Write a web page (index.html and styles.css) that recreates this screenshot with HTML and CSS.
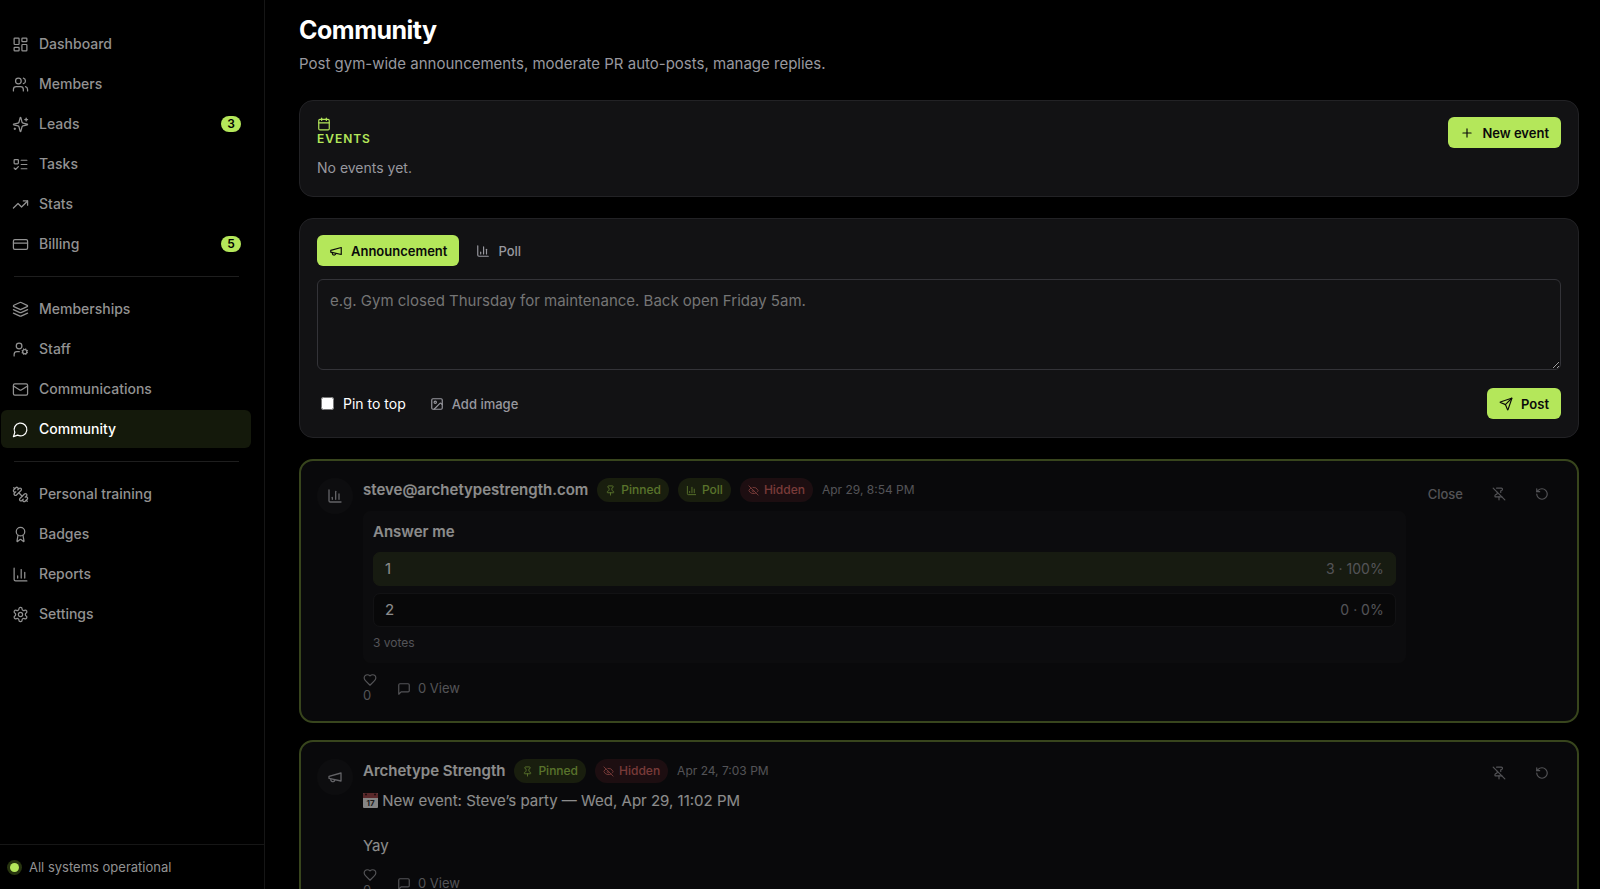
FILE: index.html
```html
<!DOCTYPE html>
<html lang="en">
<head>
<meta charset="utf-8">
<meta name="viewport" content="width=device-width, initial-scale=1">
<title>Community</title>
<link rel="stylesheet" href="styles.css">
</head>
<body>
<svg class="sprite" aria-hidden="true">
  <symbol id="i-dashboard" viewBox="0 0 24 24"><rect width="7" height="9" x="3" y="3" rx="1"/><rect width="7" height="5" x="14" y="3" rx="1"/><rect width="7" height="9" x="14" y="12" rx="1"/><rect width="7" height="5" x="3" y="16" rx="1"/></symbol>
  <symbol id="i-users" viewBox="0 0 24 24"><path d="M16 21v-2a4 4 0 0 0-4-4H6a4 4 0 0 0-4 4v2"/><circle cx="9" cy="7" r="4"/><path d="M22 21v-2a4 4 0 0 0-3-3.87"/><path d="M16 3.13a4 4 0 0 1 0 7.75"/></symbol>
  <symbol id="i-sparkles" viewBox="0 0 24 24"><path d="M9.937 15.5A2 2 0 0 0 8.5 14.063l-6.135-1.582a.5.5 0 0 1 0-.962L8.5 9.936A2 2 0 0 0 9.937 8.5l1.582-6.135a.5.5 0 0 1 .963 0L14.063 8.5A2 2 0 0 0 15.5 9.937l6.135 1.581a.5.5 0 0 1 0 .964L15.5 14.063a2 2 0 0 0-1.437 1.437l-1.582 6.135a.5.5 0 0 1-.963 0z"/><path d="M20 3v4"/><path d="M22 5h-4"/><path d="M4 17v2"/><path d="M5 18H3"/></symbol>
  <symbol id="i-tasks" viewBox="0 0 24 24"><rect x="3" y="5" width="6" height="6" rx="1"/><path d="m3 17 2 2 4-4"/><path d="M13 6h8"/><path d="M13 12h8"/><path d="M13 18h8"/></symbol>
  <symbol id="i-trend" viewBox="0 0 24 24"><path d="M22 7 13.5 15.5 8.5 10.5 2 17"/><path d="M16 7h6v6"/></symbol>
  <symbol id="i-card" viewBox="0 0 24 24"><rect width="20" height="14" x="2" y="5" rx="2"/><path d="M2 10h20"/></symbol>
  <symbol id="i-layers" viewBox="0 0 24 24"><path d="m12.83 2.18a2 2 0 0 0-1.66 0L2.6 6.08a1 1 0 0 0 0 1.83l8.58 3.91a2 2 0 0 0 1.66 0l8.58-3.9a1 1 0 0 0 0-1.83Z"/><path d="m22 12.2-9.17 4.13a2 2 0 0 1-1.66 0L2 12.2"/><path d="m22 17.2-9.17 4.13a2 2 0 0 1-1.66 0L2 17.2"/></symbol>
  <symbol id="i-usercog" viewBox="0 0 24 24"><circle cx="10" cy="7" r="4"/><path d="M10.3 15H7a4 4 0 0 0-4 4v2"/><circle cx="18" cy="15" r="3"/><path d="m21.7 16.4-.9-.3M15.2 13.9l-.9-.3M16.6 18.7l.3-.9M19.1 12.2l.3-.9M19.6 18.7l-.4-1M16.8 12.3l-.4-1M14.3 16.6l1-.4M20.7 13.8l1-.4"/></symbol>
  <symbol id="i-mail" viewBox="0 0 24 24"><rect width="20" height="16" x="2" y="4" rx="2"/><path d="m22 7-8.97 5.7a1.94 1.94 0 0 1-2.06 0L2 7"/></symbol>
  <symbol id="i-chat" viewBox="0 0 24 24"><path d="M7.9 20A9 9 0 1 0 4 16.1L2 22Z"/></symbol>
  <symbol id="i-dumbbell" viewBox="0 0 24 24"><path d="M14.4 14.4 9.6 9.6"/><path d="M18.657 21.485a2 2 0 1 1-2.829-2.828l-1.767 1.768a2 2 0 1 1-2.829-2.829l6.364-6.364a2 2 0 1 1 2.829 2.829l-1.768 1.767a2 2 0 1 1 2.828 2.829z"/><path d="m21.5 21.5-1.4-1.4"/><path d="M3.9 3.9 2.5 2.5"/><path d="M6.404 12.768a2 2 0 1 1-2.829-2.829l1.768-1.767a2 2 0 1 1-2.828-2.829l2.828-2.828a2 2 0 1 1 2.829 2.828l1.767-1.768a2 2 0 1 1 2.829 2.829z"/></symbol>
  <symbol id="i-award" viewBox="0 0 24 24"><path d="m15.477 12.89 1.515 8.526a.5.5 0 0 1-.81.47l-3.58-2.687a1 1 0 0 0-1.197 0l-3.586 2.686a.5.5 0 0 1-.81-.469l1.514-8.526"/><circle cx="12" cy="8" r="6"/></symbol>
  <symbol id="i-chart" viewBox="0 0 24 24"><path d="M3 3v16a2 2 0 0 0 2 2h16"/><path d="M18 17V9"/><path d="M13 17V5"/><path d="M8 17v-3"/></symbol>
  <symbol id="i-settings" viewBox="0 0 24 24"><path d="M12.22 2h-.44a2 2 0 0 0-2 2v.18a2 2 0 0 1-1 1.73l-.43.25a2 2 0 0 1-2 0l-.15-.08a2 2 0 0 0-2.73.73l-.22.38a2 2 0 0 0 .73 2.73l.15.1a2 2 0 0 1 1 1.72v.51a2 2 0 0 1-1 1.74l-.15.09a2 2 0 0 0-.73 2.73l.22.38a2 2 0 0 0 2.73.73l.15-.08a2 2 0 0 1 2 0l.43.25a2 2 0 0 1 1 1.73V20a2 2 0 0 0 2 2h.44a2 2 0 0 0 2-2v-.18a2 2 0 0 1 1-1.73l.43-.25a2 2 0 0 1 2 0l.15.08a2 2 0 0 0 2.73-.73l.22-.39a2 2 0 0 0-.73-2.73l-.15-.08a2 2 0 0 1-1-1.74v-.5a2 2 0 0 1 1-1.74l.15-.09a2 2 0 0 0 .73-2.73l-.22-.38a2 2 0 0 0-2.73-.73l-.15.08a2 2 0 0 1-2 0l-.43-.25a2 2 0 0 1-1-1.73V4a2 2 0 0 0-2-2z"/><circle cx="12" cy="12" r="3"/></symbol>
  <symbol id="i-calendar" viewBox="0 0 24 24"><path d="M8 2v4"/><path d="M16 2v4"/><rect width="18" height="18" x="3" y="4" rx="2"/><path d="M3 10h18"/></symbol>
  <symbol id="i-plus" viewBox="0 0 24 24"><path d="M5 12h14"/><path d="M12 5v14"/></symbol>
  <symbol id="i-megaphone" viewBox="0 0 24 24"><path d="m3 11 18-5v12L3 14v-3z"/><path d="M11.6 16.8a3 3 0 1 1-5.8-1.6"/></symbol>
  <symbol id="i-image" viewBox="0 0 24 24"><rect width="18" height="18" x="3" y="3" rx="2"/><circle cx="9" cy="9" r="2"/><path d="m21 13-1.600-1.600a2 2 0 0 0-2.828 0L7 21"/></symbol>
  <symbol id="i-send" viewBox="0 0 24 24"><path d="M14.536 21.686a.5.5 0 0 0 .937-.024l6.5-19a.496.496 0 0 0-.635-.635l-19 6.5a.5.5 0 0 0-.024.937l7.930 3.180a2 2 0 0 1 1.112 1.110z"/><path d="m21.854 2.147-10.940 10.939"/></symbol>
  <symbol id="i-pin" viewBox="0 0 24 24"><path d="M12 17v5"/><path d="M9 10.760a2 2 0 0 1-1.110 1.790l-1.780.9A2 2 0 0 0 5 15.240V16a1 1 0 0 0 1 1h12a1 1 0 0 0 1-1v-.760a2 2 0 0 0-1.110-1.790l-1.780-.9A2 2 0 0 1 15 10.760V7a1 1 0 0 1 1-1 2 2 0 0 0 0-4H8a2 2 0 0 0 0 4 1 1 0 0 1 1 1z"/></symbol>
  <symbol id="i-unpin" viewBox="0 0 24 24"><path d="M12 17v5"/><path d="M15 9.340V7a1 1 0 0 1 1-1 2 2 0 0 0 0-4H7.890"/><path d="m2 2 20 20"/><path d="M9 9v1.760a2 2 0 0 1-1.110 1.790l-1.780.9A2 2 0 0 0 5 15.240V16a1 1 0 0 0 1 1h11"/></symbol>
  <symbol id="i-eyeoff" viewBox="0 0 24 24"><path d="M10.733 5.076a10.744 10.744 0 0 1 11.205 6.575 1 1 0 0 1 0 .696 10.747 10.747 0 0 1-1.444 2.490"/><path d="M14.084 14.158a3 3 0 0 1-4.242-4.242"/><path d="M17.479 17.499a10.750 10.750 0 0 1-15.417-5.151 1 1 0 0 1 0-.696 10.750 10.750 0 0 1 4.446-5.143"/><path d="m2 2 20 20"/></symbol>
  <symbol id="i-undo" viewBox="0 0 24 24"><path d="M3 12a9 9 0 1 0 9-9 9.750 9.750 0 0 0-6.740 2.740L3 8"/><path d="M3 3v5h5"/></symbol>
  <symbol id="i-heart" viewBox="0 0 24 24"><path d="M19 14c1.490-1.460 3-3.210 3-5.500A5.500 5.500 0 0 0 16.500 3c-1.760 0-3 .5-4.500 2-1.500-1.500-2.740-2-4.500-2A5.500 5.500 0 0 0 2 8.500c0 2.300 1.500 4.050 3 5.500l7 7Z"/></symbol>
  <symbol id="i-comment" viewBox="0 0 24 24"><path d="M21 15a2 2 0 0 1-2 2H7l-4 4V5a2 2 0 0 1 2-2h14a2 2 0 0 1 2 2z"/></symbol>
</svg>

<div class="app">
  <aside class="sidebar">
    <nav class="nav" aria-label="Main">
      <a class="nav-item" href="#dashboard"><svg class="icon icon-nav"><use href="#i-dashboard"/></svg>Dashboard</a>
      <a class="nav-item" href="#members"><svg class="icon icon-nav"><use href="#i-users"/></svg>Members</a>
      <a class="nav-item" href="#leads"><svg class="icon icon-nav"><use href="#i-sparkles"/></svg>Leads<span class="count">3</span></a>
      <a class="nav-item" href="#tasks"><svg class="icon icon-nav"><use href="#i-tasks"/></svg>Tasks</a>
      <a class="nav-item" href="#stats"><svg class="icon icon-nav"><use href="#i-trend"/></svg>Stats</a>
      <a class="nav-item" href="#billing"><svg class="icon icon-nav"><use href="#i-card"/></svg>Billing<span class="count">5</span></a>
      <hr class="nav-rule">
      <a class="nav-item" href="#memberships"><svg class="icon icon-nav"><use href="#i-layers"/></svg>Memberships</a>
      <a class="nav-item" href="#staff"><svg class="icon icon-nav"><use href="#i-usercog"/></svg>Staff</a>
      <a class="nav-item" href="#communications"><svg class="icon icon-nav"><use href="#i-mail"/></svg>Communications</a>
      <a class="nav-item active" href="#community" aria-current="page"><svg class="icon icon-nav"><use href="#i-chat"/></svg>Community</a>
      <hr class="nav-rule">
      <a class="nav-item" href="#training"><svg class="icon icon-nav"><use href="#i-dumbbell"/></svg>Personal training</a>
      <a class="nav-item" href="#badges"><svg class="icon icon-nav"><use href="#i-award"/></svg>Badges</a>
      <a class="nav-item" href="#reports"><svg class="icon icon-nav"><use href="#i-chart"/></svg>Reports</a>
      <a class="nav-item" href="#settings"><svg class="icon icon-nav"><use href="#i-settings"/></svg>Settings</a>
    </nav>
    <div class="status"><span class="status-dot"></span>All systems operational</div>
  </aside>

  <main class="main">
    <header class="page-head">
      <h1 class="title">Community</h1>
      <p class="subtitle">Post gym-wide announcements, moderate PR auto-posts, manage replies.</p>
    </header>

    <section class="card events">
      <div class="events-info">
        <h2 class="eyebrow"><svg class="icon icon-sm"><use href="#i-calendar"/></svg>Events</h2>
        <p class="muted">No events yet.</p>
      </div>
      <button class="btn btn-primary" type="button"><svg class="icon icon-sm"><use href="#i-plus"/></svg>New event</button>
    </section>

    <form class="card composer">
      <div class="row tabs">
        <button class="btn btn-primary" type="button"><svg class="icon icon-sm"><use href="#i-megaphone"/></svg>Announcement</button>
        <button class="btn btn-ghost" type="button"><svg class="icon icon-sm"><use href="#i-chart"/></svg>Poll</button>
      </div>
      <textarea class="message" aria-label="Announcement" placeholder="e.g. Gym closed Thursday for maintenance. Back open Friday 5am."></textarea>
      <div class="row composer-foot">
        <label class="pin"><input class="pin-box" type="checkbox">Pin to top</label>
        <button class="btn btn-ghost" type="button"><svg class="icon icon-sm"><use href="#i-image"/></svg>Add image</button>
        <button class="btn btn-primary push" type="submit"><svg class="icon icon-sm"><use href="#i-send"/></svg>Post</button>
      </div>
    </form>

    <div class="feed">
      <article class="post">
        <span class="avatar"><svg class="icon icon-md"><use href="#i-chart"/></svg></span>
        <div class="post-body">
          <div class="post-head">
            <strong class="author">steve@archetypestrength.com</strong>
            <span class="pill"><svg class="icon icon-xs"><use href="#i-pin"/></svg>Pinned</span>
            <span class="pill"><svg class="icon icon-xs"><use href="#i-chart"/></svg>Poll</span>
            <span class="pill pill-red"><svg class="icon icon-xs"><use href="#i-eyeoff"/></svg>Hidden</span>
            <time class="date">Apr 29, 8:54 PM</time>
          </div>
          <div class="poll">
            <h3 class="question">Answer me</h3>
            <div class="option option-win"><span>1</span><span class="tally">3 · 100%</span></div>
            <div class="option"><span>2</span><span class="tally">0 · 0%</span></div>
            <p class="votes">3 votes</p>
          </div>
          <div class="reactions">
            <span class="likes"><svg class="icon icon-sm"><use href="#i-heart"/></svg>0</span>
            <button class="replies" type="button"><svg class="icon icon-sm"><use href="#i-comment"/></svg>0 View</button>
          </div>
        </div>
        <div class="tools">
          <button class="btn btn-ghost" type="button">Close</button>
          <button class="btn btn-ghost btn-icon" type="button" aria-label="Unpin"><svg class="icon icon-sm"><use href="#i-unpin"/></svg></button>
          <button class="btn btn-ghost btn-icon" type="button" aria-label="Restore"><svg class="icon icon-sm"><use href="#i-undo"/></svg></button>
        </div>
      </article>

      <article class="post">
        <span class="avatar"><svg class="icon icon-md"><use href="#i-megaphone"/></svg></span>
        <div class="post-body">
          <div class="post-head">
            <strong class="author">Archetype Strength</strong>
            <span class="pill"><svg class="icon icon-xs"><use href="#i-pin"/></svg>Pinned</span>
            <span class="pill pill-red"><svg class="icon icon-xs"><use href="#i-eyeoff"/></svg>Hidden</span>
            <time class="date">Apr 24, 7:03 PM</time>
          </div>
          <div class="text">
            <p><svg class="emoji" viewBox="0 0 15 15" role="img" aria-label="Calendar"><rect width="15" height="15" rx="1" fill="#f2f2f2"/><path d="M0 1a1 1 0 0 1 1-1h13a1 1 0 0 1 1 1v4H0z" fill="#a34a4e"/><circle cx="3" cy="1.500" r="1" fill="#301518"/><circle cx="12" cy="1.500" r="1" fill="#301518"/><text class="emoji-day" x="7.500" y="13" text-anchor="middle">17</text></svg> New event: Steve’s party — Wed, Apr 29, 11:02 PM</p>
            <p>Yay</p>
          </div>
          <div class="reactions">
            <span class="likes"><svg class="icon icon-sm"><use href="#i-heart"/></svg>0</span>
            <button class="replies" type="button"><svg class="icon icon-sm"><use href="#i-comment"/></svg>0 View</button>
          </div>
        </div>
        <div class="tools">
          <button class="btn btn-ghost btn-icon" type="button" aria-label="Unpin"><svg class="icon icon-sm"><use href="#i-unpin"/></svg></button>
          <button class="btn btn-ghost btn-icon" type="button" aria-label="Restore"><svg class="icon icon-sm"><use href="#i-undo"/></svg></button>
        </div>
      </article>
    </div>
  </main>
</div>
</body>
</html>
```

FILE: styles.css
```css
:root {
  --lime: #b4e75a;
  --surface: #121214;
  --line: #222225;
  --muted: #98989f;
}

* { box-sizing: border-box; }

body,
h1, h2, h3, p { margin: 0; }

body {
  background: #000;
  color: #fff;
  font-family: Inter, "Noto Sans", sans-serif;
  font-size: 15px;
  line-height: 22px;
}

button, textarea, input { font: inherit; }

.sprite {
  position: absolute;
  width: 0;
  height: 0;
}

.icon {
  flex: none;
  fill: none;
  stroke: currentColor;
  stroke-width: 2;
  stroke-linecap: round;
  stroke-linejoin: round;
}
.icon-nav { width: 17px; height: 17px; stroke-width: 1.75; }
.icon-md { width: 16px; height: 16px; }
.icon-sm { width: 14px; height: 14px; }
.icon-xs { width: 11px; height: 11px; }

.app {
  display: flex;
  height: 100vh;
  overflow: hidden;
}

/* Sidebar */
.sidebar {
  display: flex;
  flex: none;
  flex-direction: column;
  width: 265px;
  border-right: 1px solid #161616;
}

.nav {
  display: flex;
  flex: 1;
  flex-direction: column;
  gap: 2px;
  padding: 25px 13px 0 1px;
}

.nav-item {
  display: flex;
  align-items: center;
  gap: 10px;
  height: 38px;
  padding: 0 10px 0 11px;
  border-radius: 6px;
  color: #929292;
  font-size: 14px;
  font-weight: 500;
  text-decoration: none;
}
.nav-item.active { background: #14190b; color: #fff; }

.count {
  min-width: 20px;
  margin-left: auto;
  padding: 0 6px;
  border-radius: 8px;
  background: var(--lime);
  color: #000;
  font-size: 12px;
  font-weight: 600;
  line-height: 16px;
  text-align: center;
}

.nav-rule {
  width: calc(100% - 25px);
  height: 1px;
  margin: 11px 13px;
  border: 0;
  background: #1e1e1e;
}

.status {
  display: flex;
  align-items: center;
  gap: 10px;
  height: 45px;
  padding-left: 10px;
  border-top: 1px solid #161616;
  color: #929292;
  font-size: 13px;
}
.status-dot {
  width: 9px;
  height: 9px;
  border-radius: 50%;
  background: var(--lime);
  box-shadow: 0 0 0 3px #27340f;
}

/* Page */
.main {
  display: flex;
  flex: 1;
  flex-direction: column;
  gap: 21px;
  min-width: 0;
  padding: 12px 21px 0 34px;
}

.page-head { padding-bottom: 4px; }
.title {
  font-size: 25px;
  font-weight: 700;
  letter-spacing: -0.02em;
  line-height: 36px;
}
.subtitle { margin-top: 5px; color: var(--muted); }

.card {
  flex: none;
  padding: 16px 17px 18px;
  border: 1px solid var(--line);
  border-radius: 14px;
  background: var(--surface);
}

.btn {
  display: inline-flex;
  align-items: center;
  gap: 8px;
  height: 31px;
  padding: 0 12px;
  border: 0;
  border-radius: 6px;
  font-size: 13px;
  font-weight: 500;
  white-space: nowrap;
}
.btn-primary { background: var(--lime); color: #0a0a0a; font-weight: 600; }
.btn-ghost { background: none; color: var(--muted); }
.btn-icon { height: 28px; }
.push { margin-left: auto; }

.events {
  display: flex;
  align-items: flex-start;
  justify-content: space-between;
}
.eyebrow {
  display: flex;
  flex-direction: column;
  color: var(--lime);
  font-size: 12px;
  font-weight: 600;
  letter-spacing: 0.08em;
  line-height: 15px;
  text-transform: uppercase;
}
.muted {
  margin-top: 12px;
  color: var(--muted);
  font-size: 14px;
  line-height: 20px;
}

.row { display: flex; align-items: center; }
.tabs { gap: 5px; }

.message {
  display: block;
  width: 100%;
  height: 91px;
  margin: 13px 0 18px;
  padding: 10px 12px;
  border: 1px solid #333338;
  border-radius: 6px;
  background: none;
  color: #fff;
  resize: vertical;
}
.message::placeholder { color: #757575; }

.composer-foot { gap: 12px; }
.pin {
  display: flex;
  align-items: center;
  gap: 9px;
  padding-left: 4px;
  font-size: 14px;
}
.pin-box { width: 13px; height: 13px; margin: 0; }

/* Feed */
.feed {
  display: flex;
  flex-direction: column;
  gap: 17px;
}
.post {
  display: flex;
  gap: 10px;
  padding: 17px 16px;
  border: 2px solid #667f36;
  border-radius: 14px;
  background: var(--surface);
  opacity: 0.55;
}
.avatar {
  display: grid;
  flex: none;
  place-items: center;
  width: 36px;
  height: 36px;
  border-radius: 50%;
  background: #18181c;
  color: #b4b4ba;
}
.post-body { flex: 1; min-width: 0; }
.post-head {
  display: flex;
  align-items: center;
  gap: 9px;
}
.author { font-weight: 600; }
.pill {
  display: inline-flex;
  align-items: center;
  gap: 5px;
  height: 24px;
  padding: 0 8px;
  border-radius: 12px;
  background: #2e371b;
  color: #a3d24f;
  font-size: 12px;
  font-weight: 500;
}
.pill-red { background: #351b20; color: #dc6b68; }
.date { color: var(--muted); font-size: 12px; }

.poll {
  display: flex;
  flex-direction: column;
  gap: 7px;
  margin-top: 9px;
  padding: 10px;
  border-radius: 8px;
  background: #17171b;
}
.question {
  padding-bottom: 2px;
  font-size: 15px;
  font-weight: 600;
}
.option {
  display: flex;
  align-items: center;
  justify-content: space-between;
  height: 34px;
  padding: 0 11px;
  border: 1px solid var(--line);
  border-radius: 7px;
  background: #101012;
}
.option-win { border-color: #2b321f; background: #2b321f; }
.tally { color: var(--muted); font-size: 14px; }
.votes {
  padding-bottom: 1px;
  color: var(--muted);
  font-size: 12px;
  line-height: 18px;
}

.reactions {
  display: flex;
  align-items: center;
  gap: 20px;
  margin-top: 10px;
  color: var(--muted);
  font-size: 13px;
  line-height: 17px;
}
.likes { display: flex; flex-direction: column; }
.replies {
  display: flex;
  align-items: center;
  gap: 7px;
  padding: 0;
  border: 0;
  background: none;
  color: inherit;
}

.tools {
  display: flex;
  flex: none;
  align-items: center;
  align-self: flex-start;
  gap: 5px;
}

.text {
  display: flex;
  flex-direction: column;
  gap: 23px;
  padding: 7px 0 1px;
}
.emoji {
  width: 15px;
  height: 15px;
  vertical-align: -2px;
}
.emoji-day {
  fill: #333;
  font-size: 8px;
  font-weight: 700;
}
```
